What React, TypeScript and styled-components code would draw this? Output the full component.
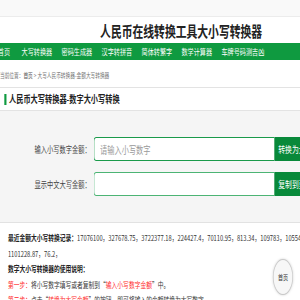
import styled, { createGlobalStyle } from 'styled-components';

const GlobalStyle = createGlobalStyle`
  html, body {
    margin: 0;
    padding: 0;
    background: #fff;
    overflow: hidden;
  }
  body {
    font-family: "Noto Sans CJK SC", "Noto Sans", "Liberation Sans", sans-serif;
  }
`;

const Viewport = styled.div`
  width: 300px;
  height: 300px;
  overflow: hidden;
`;

const Stage = styled.div`
  position: relative;
  width: 417px;
  height: 300px;
  transform: scaleX(0.72);
  transform-origin: 0 0;
`;

const TopBar = styled.div`
  height: 16px;
  background: #f9f9f9;
  border-bottom: 1px solid #ececec;
`;

const Header = styled.div`
  height: 26px;
  display: flex;
  align-items: center;
  padding-left: 139px;
`;

const SiteTitle = styled.h1`
  margin: 0;
  font-size: 15px;
  font-weight: 700;
  color: #222;
  line-height: 1;
  white-space: nowrap;
`;

const Nav = styled.nav`
  height: 17px;
  background: #0f9a40;
  display: flex;
  align-items: center;
  gap: 13px;
  margin-left: -3px;
  white-space: nowrap;
`;

const NavItem = styled.a<{ $first?: boolean }>`
  font-size: 8.5px;
  line-height: 1;
  color: #fff;
  text-decoration: none;
  margin-right: ${({ $first }) => ($first ? '3px' : '0')};
`;

const Crumbs = styled.div`
  height: 16px;
  padding-top: 11px;
  font-size: 6.5px;
  line-height: 8px;
  color: #777;
  white-space: nowrap;
`;

const CrumbLink = styled.span`
  color: #555;
`;

const CardHead = styled.div`
  height: 22px;
  border-top: 1px solid #e3e3e3;
  border-bottom: 1px solid #e3e3e3;
  display: flex;
  align-items: center;
  gap: 4px;
  padding-left: 5.5px;
`;

const Mark = styled.span`
  width: 3px;
  height: 11px;
  background: #0f9a40;
`;

const CardTitle = styled.h2`
  margin: 0;
  font-size: 10px;
  font-weight: 700;
  color: #222;
  line-height: 1;
  white-space: nowrap;
`;

const Form = styled.div`
  background: #f5f5f5;
  border-bottom: 1px solid #e2e2e2;
  padding: 26px 0 26px;
  display: flex;
  flex-direction: column;
  gap: 11px;
`;

const Row = styled.div`
  display: grid;
  grid-template-columns: 126px 251px 80px;
  column-gap: 4px;
  height: 24px;
  align-items: center;
`;

const Label = styled.label`
  font-size: 8.7px;
  color: #444;
  text-align: right;
  white-space: nowrap;
`;

const Field = styled.input<{ $tone: string }>`
  box-sizing: border-box;
  height: 24px;
  width: 251px;
  border: 1px solid ${({ $tone }) => $tone};
  border-right: none;
  border-radius: 4px 0 0 4px;
  background: #fff;
  padding: 0 0 0 8px;
  font-family: inherit;
  font-size: 10px;
  color: #333;
  outline: none;

  &::placeholder {
    color: #999;
  }
`;

const ActionButton = styled.button`
  height: 24px;
  margin-left: -4px;
  border: none;
  background: #08893a;
  color: #fff;
  font-family: inherit;
  font-size: 9.5px;
  text-align: left;
  padding: 0 0 0 5.5px;
  white-space: nowrap;
`;

const Info = styled.div`
  padding: 7px 0 0 11px;
  font-size: 8px;
  line-height: 15.5px;
  color: #333;
`;

const Line = styled.div`
  white-space: nowrap;
`;

const Strong = styled.b`
  font-weight: 700;
  color: #222;
`;

const Red = styled.span`
  color: #ff2a2a;
`;

const HomeBubble = styled.a`
  position: absolute;
  right: 10px;
  top: 259px;
  box-sizing: border-box;
  width: 28px;
  height: 36px;
  border-radius: 50%;
  border: 1px solid #c9c9c9;
  background: #f7f7f7;
  box-shadow: 0 0 3px rgba(0, 0, 0, 0.18);
  display: flex;
  align-items: center;
  justify-content: center;
  font-size: 7px;
  color: #333;
  text-decoration: none;
`;

const navItems = ['大写转换器', '密码生成器', '汉字转拼音', '简体转繁字', '数学计算器', '车牌号码测吉凶'];

export default function App() {
  return (
    <Viewport>
      <GlobalStyle />
      <Stage>
        <TopBar />
        <Header>
          <SiteTitle>人民币在线转换工具大小写转换器</SiteTitle>
        </Header>
        <Nav>
          <NavItem $first>首页</NavItem>
          {navItems.map((n) => (
            <NavItem key={n}>{n}</NavItem>
          ))}
        </Nav>
        <Crumbs>
          当前位置：<CrumbLink>首页</CrumbLink> &gt; 大写人民币转换器-金额大写转换器
        </Crumbs>
        <CardHead>
          <Mark />
          <CardTitle>人民币大写转换器-数字大小写转换</CardTitle>
        </CardHead>
        <Form>
          <Row>
            <Label>输入小写数字金额：</Label>
            <Field $tone="#1a9a4a" placeholder="请输入小写数字" />
            <ActionButton>转换为大写金额</ActionButton>
          </Row>
          <Row>
            <Label>显示中文大写金额：</Label>
            <Field $tone="#4cb474" readOnly />
            <ActionButton>复制到剪贴板</ActionButton>
          </Row>
        </Form>
        <Info>
          <Line>
            <Strong>最近金额大小写转换记录：</Strong>17076100，327678.75，3722377.18，224427.4，70110.95，813.34，109783，1055406.2，
          </Line>
          <Line>1101228.87，76.2，</Line>
          <Line>
            <Strong>数字大小写转换器的使用说明：</Strong>
          </Line>
          <Line>
            <Red>第一步：</Red>将小写数字填写或者复制到“<Red>输入小写数字金额</Red>”中。
          </Line>
          <Line>
            <Red>第二步：</Red>点击“<Red>转换为大写金额</Red>”的按钮，即可将输入的金额转换为大写数字。
          </Line>
        </Info>
        <HomeBubble>首页</HomeBubble>
      </Stage>
    </Viewport>
  );
}
